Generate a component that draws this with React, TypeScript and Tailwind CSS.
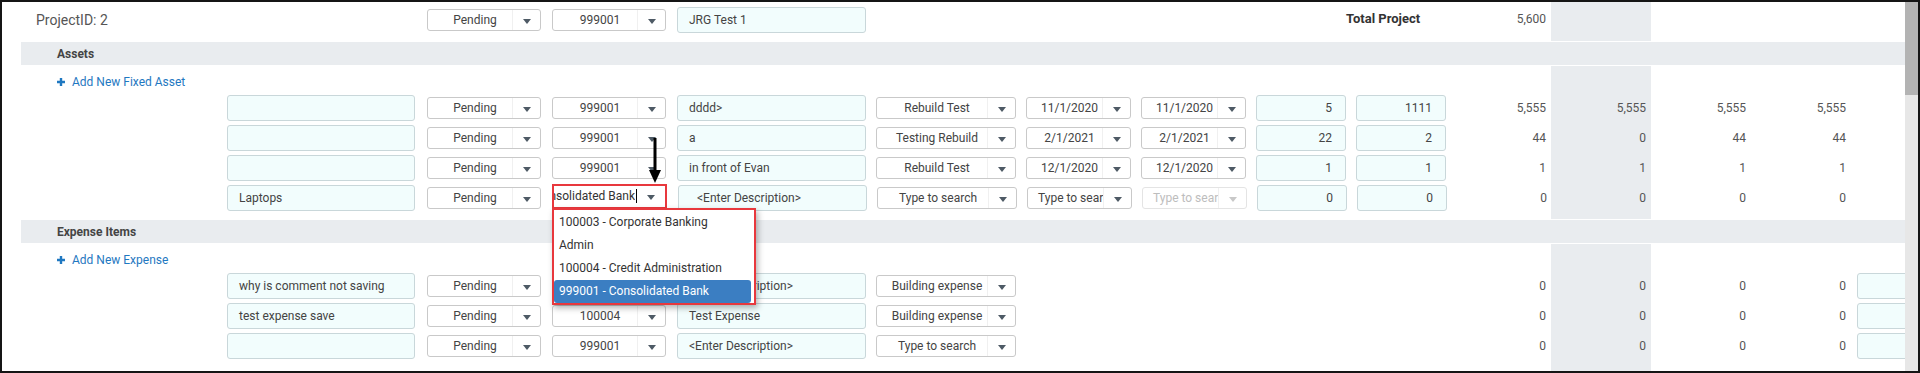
import React from "react";

type Item = {
  name: string;
  status: string;
  center: string;
  desc: string;
  indent?: boolean;
  type: string;
  start?: string;
  end?: string;
  endDisabled?: boolean;
  qty?: string;
  cost?: string;
  vals: string[];
  open?: boolean;
  extra?: boolean;
};

const assets: Item[] = [
  { name: "", status: "Pending", center: "999001", desc: "dddd>", type: "Rebuild Test", start: "11/1/2020", end: "11/1/2020", qty: "5", cost: "1111", vals: ["5,555", "5,555", "5,555", "5,555"] },
  { name: "", status: "Pending", center: "999001", desc: "a", type: "Testing Rebuild", start: "2/1/2021", end: "2/1/2021", qty: "22", cost: "2", vals: ["44", "0", "44", "44"] },
  { name: "", status: "Pending", center: "999001", desc: "in front of Evan", type: "Rebuild Test", start: "12/1/2020", end: "12/1/2020", qty: "1", cost: "1", vals: ["1", "1", "1", "1"] },
  { name: "Laptops", status: "Pending", center: "", desc: "<Enter Description>", indent: true, type: "Type to search", start: "Type to search", end: "Type to search", endDisabled: true, qty: "0", cost: "0", vals: ["0", "0", "0", "0"], open: true },
];

const expenses: Item[] = [
  { name: "why is comment not saving", status: "Pending", center: "999001", desc: "<Enter Description>", type: "Building expense", vals: ["0", "0", "0", "0"], extra: true },
  { name: "test expense save", status: "Pending", center: "100004", desc: "Test Expense", type: "Building expense", vals: ["0", "0", "0", "0"], extra: true },
  { name: "", status: "Pending", center: "999001", desc: "<Enter Description>", type: "Type to search", vals: ["0", "0", "0", "0"], extra: true },
];

const options = ["100003 - Corporate Banking", "Admin", "100004 - Credit Administration", "999001 - Consolidated Bank"];

const Caret = ({ muted = false }: { muted?: boolean }) => (
  <svg width="8" height="5" viewBox="0 0 8 5" className={muted ? "text-[#c8c8c8]" : "text-[#4e5a65]"}>
    <path d="M0 0h8L4 5z" fill="currentColor" />
  </svg>
);

const TextBox = ({ value = "", className = "", right = false, indent = false }: { value?: string; className?: string; right?: boolean; indent?: boolean }) => (
  <div
    className={`flex h-[26px] shrink-0 items-center overflow-hidden whitespace-nowrap rounded-[3px] border border-[#c9d7da] bg-[#f2fdfd] text-[12px] text-[#444] ${
      right ? "justify-end pr-[13px]" : indent ? "pl-[18px]" : "pl-[11px]"
    } ${className}`}
  >
    {value}
  </div>
);

const Select = ({ value, className = "", disabled = false }: { value: string; className?: string; disabled?: boolean }) => (
  <div
    className={`flex h-[22px] shrink-0 rounded-[3px] border bg-white text-[12px] ${
      disabled ? "border-[#e4e4e4] text-[#bdbdbd]" : "border-[#c9c9c9] text-[#444]"
    } ${className}`}
  >
    <div className="min-w-0 flex-1 overflow-hidden whitespace-nowrap pl-[10px] text-center leading-[20px]">{value}</div>
    <div className="flex w-[28px] items-center justify-center border-l border-[#f0f0f0] pt-[3px]">
      <Caret muted={disabled} />
    </div>
  </div>
);

const OpenSelect = () => (
  <div className="relative mb-[4px] ml-[11px] h-[25px] w-[115px] shrink-0">
    <div className="flex h-full border-2 border-[#e8383d] bg-white text-[12px] text-[#333]">
      <div className="flex min-w-0 flex-1 items-center justify-end overflow-hidden whitespace-nowrap">999001 - Consolidated Bank</div>
      <div className="ml-px h-[14px] w-px self-center bg-black" />
      <div className="flex w-[28px] items-center justify-center pt-[3px]">
        <Caret />
      </div>
    </div>

    {/* callout arrow */}
    <svg className="absolute -top-[46px] left-[96px] z-10" width="14" height="46" viewBox="0 0 14 46">
      <rect x="5.5" y="0" width="3" height="34" fill="#000" />
      <path d="M1 32h12L7 45z" fill="#000" />
    </svg>

    <div className="absolute left-0 top-[24px] z-10 w-[204px] border-2 border-[#e8383d] bg-white pt-[1px] shadow-[2px_3px_6px_rgba(0,0,0,0.3)]">
      {options.map((opt, i) => (
        <div
          key={opt}
          className={`h-[23px] whitespace-nowrap pl-[5px] text-[12px] leading-[23px] ${
            i === options.length - 1 ? "mr-[3px] rounded-[3px] bg-[#3b7ec2] text-white" : "text-[#333]"
          }`}
        >
          {opt}
        </div>
      ))}
    </div>
  </div>
);

const Num = ({ value, className = "" }: { value: string; className?: string }) => (
  <div className={`flex shrink-0 items-center justify-end pr-[5px] text-[12px] text-[#555] ${className}`}>{value}</div>
);

const Gray = ({ children }: { children?: React.ReactNode }) => (
  <div className="flex w-[100px] shrink-0 items-center justify-end bg-[#e9ecef] pr-[5px] text-[12px] text-[#555]">{children}</div>
);

const HeaderRow = () => (
  <div className="flex h-[39px] shrink-0">
    <div className="flex w-[1530px] shrink-0 items-center pb-[3px]">
      <div className="w-[206px] shrink-0 pl-[15px] text-[14px] text-[#555]">ProjectID: 2</div>
      <div className="w-[188px] shrink-0" />
      <Select value="Pending" className="ml-[12px] w-[114px]" />
      <Select value="999001" className="ml-[11px] w-[114px]" />
      <TextBox value="JRG Test 1" className="ml-[11px] w-[189px]" />
      <div className="ml-[10px] w-[470px] shrink-0" />
      <div className="mb-[3px] w-[100px] shrink-0 whitespace-nowrap text-[13px] font-bold text-[#333]">Total Project</div>
      <Num value="5,600" className="mb-[3px] w-[105px]" />
    </div>
    <Gray />
  </div>
);

const Band = ({ title }: { title: string }) => (
  <div className="my-px flex h-[23px] shrink-0 items-center bg-[#e9ecef] pl-[36px] text-[12px] font-bold text-[#444]">{title}</div>
);

const LinkRow = ({ label }: { label: string }) => (
  <div className="flex h-[27px] shrink-0">
    <div className="flex w-[1530px] shrink-0 items-start gap-[7px] pl-[36px] pt-[8px] text-[12px] leading-[16px] text-[#1f78c1]">
      <svg width="8" height="8" viewBox="0 0 8 8" className="mt-[4px]">
        <path d="M2.8 0h2.4v8H2.8zM0 2.8h8v2.4H0z" fill="currentColor" />
      </svg>
      {label}
    </div>
    <Gray />
  </div>
);

const Filler = ({ className }: { className: string }) => (
  <div className={`flex ${className}`}>
    <div className="w-[1530px] shrink-0" />
    <Gray />
  </div>
);

const DataRow = ({ item }: { item: Item }) => (
  <div className="flex h-[30px] shrink-0">
    <div className="flex w-[1530px] shrink-0 items-center">
      <div className="w-[206px] shrink-0" />
      <TextBox value={item.name} className="w-[188px]" />
      <Select value={item.status} className="ml-[12px] w-[114px]" />
      {item.open ? <OpenSelect /> : <Select value={item.center} className="ml-[11px] w-[114px]" />}
      <TextBox value={item.desc} indent={item.indent} className="ml-[11px] w-[189px]" />
      <Select value={item.type} className="ml-[10px] w-[140px]" />
      {item.start ? <Select value={item.start} className="ml-[10px] w-[105px]" /> : <div className="ml-[10px] w-[105px] shrink-0" />}
      {item.end ? (
        <Select value={item.end} disabled={item.endDisabled} className="ml-[10px] w-[105px]" />
      ) : (
        <div className="ml-[10px] w-[105px] shrink-0" />
      )}
      {item.qty ? <TextBox value={item.qty} right className="ml-[10px] w-[90px]" /> : <div className="ml-[10px] w-[90px] shrink-0" />}
      {item.cost ? <TextBox value={item.cost} right className="ml-[10px] w-[90px]" /> : <div className="ml-[10px] w-[90px] shrink-0" />}
      <Num value={item.vals[0]} className="w-[105px]" />
    </div>
    <Gray>{item.vals[1]}</Gray>
    <Num value={item.vals[2]} className="w-[100px]" />
    <Num value={item.vals[3]} className="w-[100px]" />
    {item.extra && <TextBox className="ml-[6px] w-[80px] self-center" />}
  </div>
);

export default function App() {
  return (
    <div className="flex h-[373px] w-[1920px] overflow-hidden border-2 border-[#151515] bg-white [font-family:Roboto,'Liberation_Sans',sans-serif]">
      <div className="flex min-w-0 flex-1 flex-col overflow-hidden pl-[19px]">
        <HeaderRow />
        <Band title="Assets" />
        <LinkRow label="Add New Fixed Asset" />
        {assets.map((item, i) => (
          <DataRow key={i} item={item} />
        ))}
        <Filler className="h-[6px] shrink-0" />
        <Band title="Expense Items" />
        <LinkRow label="Add New Expense" />
        {expenses.map((item, i) => (
          <DataRow key={i} item={item} />
        ))}
        <Filler className="flex-1" />
      </div>
      <div className="flex w-[13px] shrink-0 flex-col">
        <div className="h-[93px] bg-[#b3b3b3]" />
        <div className="flex-1 bg-[#e7e7e7]" />
      </div>
    </div>
  );
}
